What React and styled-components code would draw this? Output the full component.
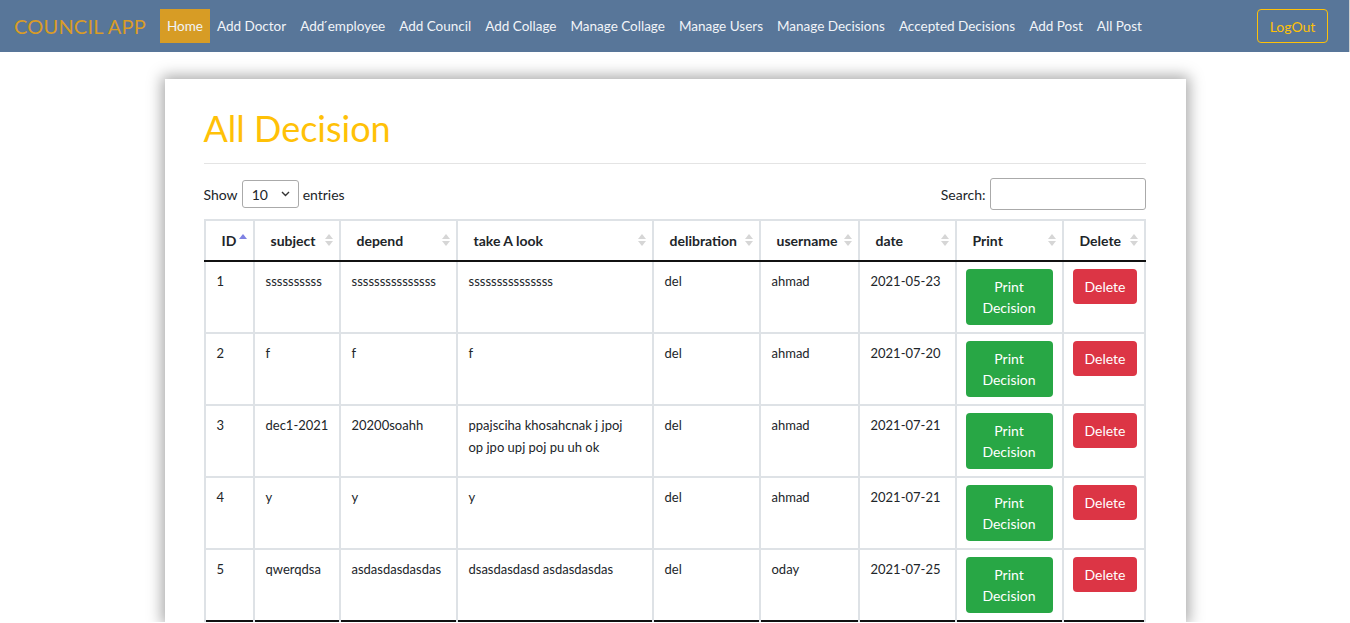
import styled, { createGlobalStyle } from "styled-components";

const GlobalStyle = createGlobalStyle`
  body {
    margin: 0;
    background: #fff;
    font-family: Lato, "Open Sans", sans-serif;
    color: #212529;
  }
`;

const NAV_LINKS = [
  "Home",
  "Add Doctor",
  "Add \u0301employee",
  "Add Council",
  "Add Collage",
  "Manage Collage",
  "Manage Users",
  "Manage Decisions",
  "Accepted Decisions",
  "Add Post",
  "All Post",
];

const COLUMNS = [
  { title: "ID", width: 49, active: true },
  { title: "subject", width: 86 },
  { title: "depend", width: 117 },
  { title: "take A look", width: 196 },
  { title: "delibration", width: 107 },
  { title: "username", width: 99 },
  { title: "date", width: 97 },
  { title: "Print", width: 107 },
  { title: "Delete", width: 82 },
];

const ROWS = [
  [1, "ssssssssss", "sssssssssssssss", "sssssssssssssss", "del", "ahmad", "2021-05-23"],
  [2, "f", "f", "f", "del", "ahmad", "2021-07-20"],
  [3, "dec1-2021", "20200soahh", "ppajsciha khosahcnak j jpoj op jpo upj poj pu uh ok", "del", "ahmad", "2021-07-21"],
  [4, "y", "y", "y", "del", "ahmad", "2021-07-21"],
  [5, "qwerqdsa", "asdasdasdasdas", "dsasdasdasd asdasdasdas", "del", "oday", "2021-07-25"],
];

const SortIcon = ({ active }) => (
  <svg width="8" height="14" viewBox="0 0 8 14">
    <polygon points="0,6 4,1 8,6" fill={active ? "#7f82e3" : "#d6d6d6"} />
    {!active && <polygon points="0,8 4,13 8,8" fill="#d6d6d6" />}
  </svg>
);

const App = () => {
  return (
    <>
      <GlobalStyle />
      <NavBar>
        <Brand>COUNCIL APP</Brand>
        <NavList>
          {NAV_LINKS.map((l, i) => (
            <NavLink key={l} $active={i === 0}>{l}</NavLink>
          ))}
        </NavList>
        <LogOut>LogOut</LogOut>
      </NavBar>

      <Page>
        <Card>
          <Title>All Decision</Title>
          <Divider />
          <Controls>
            <Label>
              Show
              <Select>
                <span>10</span>
                <svg width="9" height="6" viewBox="0 0 9 6">
                  <path d="M1 1l3.5 3.5L8 1" stroke="#333" strokeWidth="1.4" fill="none" />
                </svg>
              </Select>
              entries
            </Label>
            <Label>
              Search:
              <SearchInput />
            </Label>
          </Controls>

          <Table>
            <colgroup>
              {COLUMNS.map((c) => (
                <col key={c.title} style={{ width: c.width }} />
              ))}
            </colgroup>
            <thead>
              <tr>
                {COLUMNS.map((c) => (
                  <Th key={c.title}>
                    {c.title}
                    <SortWrap>
                      <SortIcon active={c.active} />
                    </SortWrap>
                  </Th>
                ))}
              </tr>
            </thead>
            <tbody>
              {ROWS.map((r) => (
                <tr key={r[0]}>
                  {r.map((v, i) => (
                    <Td key={i} $narrow={i === 3}>{v}</Td>
                  ))}
                  <Td $btn>
                    <Button $variant="print">Print Decision</Button>
                  </Td>
                  <Td $btn>
                    <Button $variant="delete">Delete</Button>
                  </Td>
                </tr>
              ))}
            </tbody>
          </Table>
        </Card>
      </Page>
    </>
  );
};

export default App;

const NavBar = styled.nav`
  height: 52px;
  background: #587699;
  display: flex;
  align-items: center;
  padding: 0 21px 0 14px;
  box-sizing: border-box;
  border-right: 1px solid #cfcfcf;
`;

const Brand = styled.div`
  font-size: 20px;
  color: #d99c27;
  margin-right: 14px;
  letter-spacing: 0.2px;
`;

const NavList = styled.div`
  display: flex;
  align-items: center;
  flex: 1;
`;

const NavLink = styled.a`
  height: 34px;
  display: flex;
  align-items: center;
  padding: 0 7px;
  font-size: 13.5px;
  color: #f1f4f8;
  background: ${(p) => (p.$active ? "#d79c25" : "transparent")};
`;

const LogOut = styled.button`
  height: 34px;
  width: 71px;
  border: 1px solid #ffc107;
  border-radius: 4px;
  background: transparent;
  color: #ffc107;
  font-family: inherit;
  font-size: 14px;
`;

const Page = styled.div`
  padding-top: 27px;
  display: flex;
  justify-content: center;
`;

const Card = styled.div`
  width: 1021px;
  box-sizing: border-box;
  padding: 28px 40px 0 39px;
  background: #fff;
  box-shadow: 0 0 14px 3px rgba(0, 0, 0, 0.35);
`;

const Title = styled.h1`
  margin: 0 0 13px;
  font-size: 36px;
  font-weight: 400;
  line-height: 43px;
  color: #ffc107;
`;

const Divider = styled.hr`
  margin: 0;
  border: none;
  border-top: 1px solid #e4e4e4;
`;

const Controls = styled.div`
  display: flex;
  justify-content: space-between;
  align-items: center;
  margin-top: 14px;
  margin-bottom: 9px;
`;

const Label = styled.div`
  display: flex;
  align-items: center;
  gap: 4px;
  font-size: 14px;
`;

const Select = styled.div`
  width: 57px;
  height: 28px;
  box-sizing: border-box;
  border: 1px solid #aaa;
  border-radius: 3px;
  display: flex;
  align-items: center;
  justify-content: space-between;
  padding: 0 8px 0 9px;
`;

const SearchInput = styled.input`
  width: 156px;
  height: 32px;
  box-sizing: border-box;
  border: 1px solid #aaa;
  border-radius: 3px;
`;

const Table = styled.table`
  width: 940px;
  table-layout: fixed;
  border-collapse: collapse;
  border-top: 2px solid #dee2e6;
  border-bottom: 2px solid #111;
  font-size: 13px;
`;

const Th = styled.th`
  position: relative;
  height: 39px;
  padding: 0 18px 0 16px;
  text-align: left;
  font-size: 14px;
  font-weight: 700;
  border-left: 2px solid #dee2e6;
  border-right: 2px solid #dee2e6;
  border-bottom: 2px solid #111;
  white-space: nowrap;
`;

const SortWrap = styled.span`
  position: absolute;
  right: 6px;
  top: 12px;
  line-height: 0;
`;

const Td = styled.td`
  height: 70px;
  box-sizing: border-box;
  vertical-align: top;
  padding: ${(p) =>
    p.$btn ? "7px 9px" : p.$narrow ? "8px 22px 8px 11px" : "8px 8px 8px 11px"};
  line-height: 22px;
  border: 2px solid #dee2e6;
  tr:last-child & {
    border-bottom: none;
  }
`;

const Button = styled.button`
  display: ${(p) => (p.$variant === "print" ? "block" : "inline-block")};
  width: ${(p) => (p.$variant === "print" ? "100%" : "auto")};
  padding: ${(p) => (p.$variant === "print" ? "6px 12px" : "6px 11px")};
  border: 1px solid transparent;
  border-radius: 4px;
  font-family: inherit;
  font-size: 14px;
  line-height: 21px;
  color: #fff;
  background: ${(p) => (p.$variant === "print" ? "#28a745" : "#dc3545")};
`;
